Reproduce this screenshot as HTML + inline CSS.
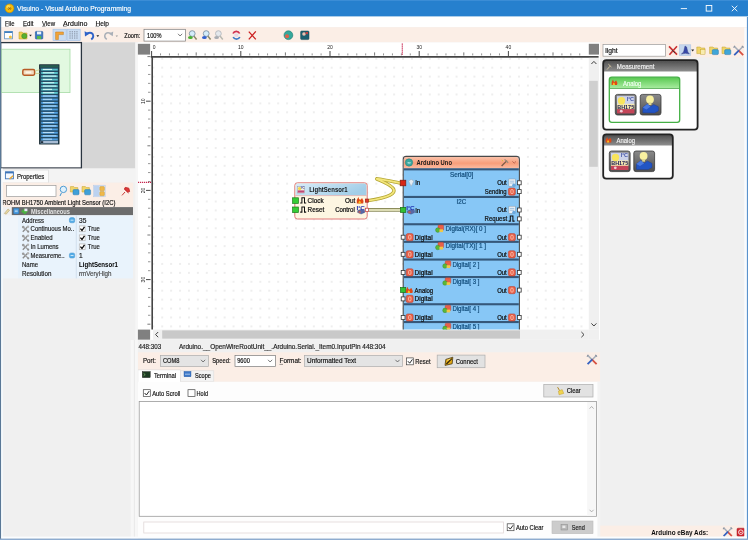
<!DOCTYPE html>
<html><head><meta charset="utf-8"><title>Visuino - Visual Arduino Programming</title>
<style>html,body{margin:0;padding:0;width:748px;height:540px;overflow:hidden;background:#f0f0f0}
svg{display:block;font-family:"Liberation Sans",sans-serif}</style></head><body>
<svg width="748" height="540" viewBox="0 0 748 540">
<defs>
<filter id="bl" filterUnits="userSpaceOnUse" x="-8" y="-8" width="764" height="556"><feGaussianBlur stdDeviation="0.4"/></filter>
<pattern id="g" x="152.3" y="57.8" width="8.92" height="8.92" patternUnits="userSpaceOnUse"><path d="M0 1 h2 M1 0 v2" stroke="#e2e2e2" stroke-width="0.7" fill="none"/></pattern>
<linearGradient id="hd" x1="0" y1="0" x2="0" y2="1"><stop offset="0" stop-color="#4c4c4c"/><stop offset="1" stop-color="#8e8e8e"/></linearGradient>
<linearGradient id="hg" x1="0" y1="0" x2="0" y2="1"><stop offset="0" stop-color="#58c850"/><stop offset="1" stop-color="#a8eca0"/></linearGradient>
<linearGradient id="ic" x1="0" y1="0" x2="0" y2="1"><stop offset="0" stop-color="#8a8a8a"/><stop offset="1" stop-color="#4e4e4e"/></linearGradient>
<clipPath id="cv"><rect x="153" y="57.8" width="435.8" height="271.8"/></clipPath>
<linearGradient id="ah" x1="0" y1="0" x2="0" y2="1"><stop offset="0" stop-color="#fbc2aa"/><stop offset="0.55" stop-color="#f89e7a"/><stop offset="1" stop-color="#fbbca2"/></linearGradient>
<linearGradient id="sh" x1="0" y1="0" x2="1" y2="0.4"><stop offset="0" stop-color="#d8ecf8"/><stop offset="1" stop-color="#a2cee8"/></linearGradient>
</defs>
<g filter="url(#bl)">
<rect x="-8" y="-8" width="764" height="556" fill="#f0f0f0"/>
<rect x="-8" y="-8" width="764" height="24.6" fill="#2680ce"/>
<rect x="-8" y="-8" width="764" height="9" fill="#3a8dd6"/>
<circle cx="9.5" cy="8.3" r="4.4" fill="#f5bc08" stroke="#c98a00" stroke-width="0.6"/>
<circle cx="8.4" cy="7" r="2" fill="#fbd850"/>
<text x="9.5" y="10.48" font-size="5.5" fill="#8a5200" font-weight="bold" text-anchor="middle">∞</text>
<text x="17" y="11.364" font-size="7.4" fill="#ffffff" textLength="114" lengthAdjust="spacingAndGlyphs" stroke="#ffffff" stroke-width="0.16">Visuino - Visual Arduino Programming</text>
<line x1="680.8" y1="8.6" x2="687" y2="8.6" stroke="#fff" stroke-width="0.9"/>
<rect x="706.2" y="5.5" width="5.6" height="5.6" fill="none" stroke="#fff" stroke-width="0.9"/>
<path d="M731.8 5.8 L737.3 11.2 M737.3 5.8 L731.8 11.2" fill="none" stroke="#fff" stroke-width="0.9"/>
<rect x="-8" y="16.6" width="764" height="10.6" fill="#ffffff"/>
<text x="5" y="25.728" font-size="7.3" fill="#111" textLength="9.5" lengthAdjust="spacingAndGlyphs" stroke="#111" stroke-width="0.16">File</text>
<line x1="5" y1="26.3" x2="8.6" y2="26.3" stroke="#333" stroke-width="0.5"/>
<text x="23" y="25.728" font-size="7.3" fill="#111" textLength="10.5" lengthAdjust="spacingAndGlyphs" stroke="#111" stroke-width="0.16">Edit</text>
<line x1="23" y1="26.3" x2="26.6" y2="26.3" stroke="#333" stroke-width="0.5"/>
<text x="42" y="25.728" font-size="7.3" fill="#111" textLength="13" lengthAdjust="spacingAndGlyphs" stroke="#111" stroke-width="0.16">View</text>
<line x1="42" y1="26.3" x2="45.6" y2="26.3" stroke="#333" stroke-width="0.5"/>
<text x="63" y="25.728" font-size="7.3" fill="#111" textLength="24.5" lengthAdjust="spacingAndGlyphs" stroke="#111" stroke-width="0.16">Arduino</text>
<line x1="63" y1="26.3" x2="66.6" y2="26.3" stroke="#333" stroke-width="0.5"/>
<text x="95.5" y="25.728" font-size="7.3" fill="#111" textLength="13.5" lengthAdjust="spacingAndGlyphs" stroke="#111" stroke-width="0.16">Help</text>
<line x1="95.5" y1="26.3" x2="99.1" y2="26.3" stroke="#333" stroke-width="0.5"/>
<rect x="-8" y="27.2" width="764" height="15.2" fill="#fbeee6"/>
<rect x="4.6" y="31.4" width="7.8" height="7.4" fill="#fff" stroke="#5b8fc4" stroke-width="0.8"/>
<rect x="4.6" y="31.4" width="7.8" height="1.6" fill="#3f7fc0"/>
<circle cx="10.4" cy="37" r="1.5" fill="#f0c040"/>
<path d="M19 32 h3 l1 1 h4 v6 h-8z" fill="#f0d050" stroke="#b89820" stroke-width="0.5"/>
<circle cx="24.3" cy="36" r="2.6" fill="#58b030" stroke="#3a8020" stroke-width="0.5"/>
<path d="M29.2 34.8 h2.6 l-1.3 1.6z" fill="#222"/>
<rect x="35.4" y="31.4" width="7.4" height="7.6" fill="#3d78c2" stroke="#27569a" stroke-width="0.6" rx="0.8"/>
<rect x="37" y="31.6" width="4.2" height="2.8" fill="#eaf2fb"/>
<rect x="37" y="36" width="4.2" height="3" fill="#58b848"/>
<rect x="53" y="29.2" width="13.2" height="11.4" fill="#c9dcf2" stroke="#9fbfe6" stroke-width="0.6"/>
<path d="M55.6 32 h7.8 v2.6 h-5 v5 h-2.8z" fill="#f2a438" stroke="#c47a18" stroke-width="0.5"/>
<rect x="67" y="29.2" width="13.2" height="11.4" fill="#c9dcf2" stroke="#9fbfe6" stroke-width="0.6"/>
<rect x="69.4" y="31.2" width="1.3" height="1.1" fill="#8a96a8"/>
<rect x="69.4" y="33.3" width="1.3" height="1.1" fill="#8a96a8"/>
<rect x="69.4" y="35.4" width="1.3" height="1.1" fill="#8a96a8"/>
<rect x="69.4" y="37.5" width="1.3" height="1.1" fill="#8a96a8"/>
<rect x="71.7" y="31.2" width="1.3" height="1.1" fill="#8a96a8"/>
<rect x="71.7" y="33.3" width="1.3" height="1.1" fill="#8a96a8"/>
<rect x="71.7" y="35.4" width="1.3" height="1.1" fill="#8a96a8"/>
<rect x="71.7" y="37.5" width="1.3" height="1.1" fill="#8a96a8"/>
<rect x="74" y="31.2" width="1.3" height="1.1" fill="#8a96a8"/>
<rect x="74" y="33.3" width="1.3" height="1.1" fill="#8a96a8"/>
<rect x="74" y="35.4" width="1.3" height="1.1" fill="#8a96a8"/>
<rect x="74" y="37.5" width="1.3" height="1.1" fill="#8a96a8"/>
<rect x="76.3" y="31.2" width="1.3" height="1.1" fill="#8a96a8"/>
<rect x="76.3" y="33.3" width="1.3" height="1.1" fill="#8a96a8"/>
<rect x="76.3" y="35.4" width="1.3" height="1.1" fill="#8a96a8"/>
<rect x="76.3" y="37.5" width="1.3" height="1.1" fill="#8a96a8"/>
<path d="M87 33.4 q5.4-1.8 6.2 2 q0.4 2.4-2 4" fill="none" stroke="#2f63c8" stroke-width="1.9"/>
<path d="M84.6 31.2 l0.4 5.2 l4.4-2.6z" fill="#2f63c8"/>
<path d="M96.4 35.2 h2.8 l-1.4 1.7z" fill="#222"/>
<path d="M111 33.4 q-5.4-1.8 -6.2 2 q-0.4 2.4 2 4" fill="none" stroke="#aab0b8" stroke-width="1.5"/>
<path d="M113.2 31.4 l-0.4 4.8 l-4-2.4z" fill="#aab0b8"/>
<path d="M115.6 35.4 h2.4 l-1.2 1.5z" fill="#999"/>
<text x="124.2" y="37.576" font-size="6.6" fill="#111" textLength="16" lengthAdjust="spacingAndGlyphs" stroke="#111" stroke-width="0.16">Zoom:</text>
<rect x="144" y="29.3" width="41.4" height="11.8" fill="#fff" stroke="#7a7a7a" stroke-width="0.7"/>
<text x="147" y="37.676" font-size="6.6" fill="#111" textLength="14.5" lengthAdjust="spacingAndGlyphs" stroke="#111" stroke-width="0.16">100%</text>
<path d="M178 33.8 l2.1 2.2 l2.1-2.2" fill="none" stroke="#444" stroke-width="0.7"/>
<line x1="193.4" y1="35.6" x2="196.6" y2="39.4" stroke="#8a8868" stroke-width="1.5"/>
<circle cx="192.2" cy="33.6" r="2.9" fill="#d4ecfa" stroke="#7e92a4" stroke-width="0.9"/>
<ellipse cx="190.4" cy="37.4" rx="2.4" ry="1.5" fill="#48b030"/>
<line x1="207.4" y1="35.6" x2="210.6" y2="39.4" stroke="#8a8868" stroke-width="1.5"/>
<circle cx="206.2" cy="33.6" r="2.9" fill="#d4ecfa" stroke="#7e92a4" stroke-width="0.9"/>
<ellipse cx="204.4" cy="37.4" rx="2.4" ry="1.5" fill="#3060d0"/>
<line x1="219.6" y1="35.6" x2="222.8" y2="39.4" stroke="#b8b8b0" stroke-width="1.5"/>
<circle cx="218.4" cy="33.6" r="2.9" fill="#e4e8ec" stroke="#b4b8bc" stroke-width="0.9"/>
<ellipse cx="216.6" cy="37.4" rx="2.4" ry="1.5" fill="#a8acb2"/>
<path d="M233 33.5 a3.6 3.6 0 0 1 6.6 0" fill="none" stroke="#d03050" stroke-width="1.7"/>
<path d="M239.8 37 a3.6 3.6 0 0 1 -6.6 0" fill="none" stroke="#3a78c8" stroke-width="1.7"/>
<rect x="234.4" y="33.6" width="3.8" height="3.2" fill="#e6d8e6"/>
<path d="M248.8 31.6 L255.8 39.4 M255.8 31.4 L248.8 39.4" fill="none" stroke="#cc2020" stroke-width="1.3"/>
<circle cx="288.4" cy="35.2" r="4.4" fill="#34a89c" stroke="#1e7a72" stroke-width="0.6"/>
<circle cx="287" cy="36.2" r="2" fill="#e06048"/>
<rect x="300.6" y="31" width="8.4" height="8.6" fill="#1f5f70" stroke="#17444f" stroke-width="0.5" rx="1"/>
<circle cx="304" cy="34" r="1.8" fill="#e8c0b0"/>
<rect x="305.6" y="32" width="2.4" height="2.2" fill="#c04040"/>
<rect x="-8" y="42.4" width="143.3" height="506" fill="#f0f0f0"/>
<rect x="82" y="42.4" width="53.3" height="126" fill="#d6d6d6"/>
<rect x="0.6" y="42.6" width="80.8" height="125.4" fill="#ffffff" stroke="#2c3440" stroke-width="1.3"/>
<rect x="1.6" y="49.2" width="68.4" height="43.4" fill="#e2f9e0" stroke="#a6dba6" stroke-width="0.8"/>
<rect x="39.6" y="64.8" width="19.4" height="79.2" fill="#244a62" stroke="#16262e" stroke-width="0.9"/>
<rect x="40.2" y="65.2" width="18.2" height="2.2" fill="#285e50"/>
<rect x="41.2" y="68.7" width="16.6" height="1.9" fill="#58c4cc"/>
<rect x="43" y="68.9" width="9" height="1.1" fill="#d4f6f6"/>
<rect x="41.2" y="72.02" width="16.6" height="1.9" fill="#58c4cc"/>
<rect x="43" y="72.22" width="11.2" height="1.1" fill="#d4f6f6"/>
<rect x="41.2" y="75.34" width="16.6" height="1.9" fill="#58c4cc"/>
<rect x="43" y="75.54" width="13.4" height="1.1" fill="#d4f6f6"/>
<rect x="41.2" y="78.66" width="16.6" height="1.9" fill="#58c4cc"/>
<rect x="43" y="78.86" width="9" height="1.1" fill="#d4f6f6"/>
<rect x="41.2" y="81.98" width="16.6" height="1.9" fill="#58c4cc"/>
<rect x="43" y="82.18" width="11.2" height="1.1" fill="#d4f6f6"/>
<rect x="41.2" y="85.3" width="16.6" height="1.9" fill="#58c4cc"/>
<rect x="43" y="85.5" width="13.4" height="1.1" fill="#d4f6f6"/>
<rect x="41.2" y="88.62" width="16.6" height="1.9" fill="#58c4cc"/>
<rect x="43" y="88.82" width="9" height="1.1" fill="#d4f6f6"/>
<rect x="41.2" y="91.94" width="16.6" height="1.9" fill="#58c4cc"/>
<rect x="43" y="92.14" width="11.2" height="1.1" fill="#d4f6f6"/>
<rect x="41.2" y="95.26" width="16.6" height="1.9" fill="#4e9ee0"/>
<rect x="43" y="95.46" width="13.4" height="1.1" fill="#b4dcf8"/>
<rect x="41.2" y="98.58" width="16.6" height="1.9" fill="#4e9ee0"/>
<rect x="43" y="98.78" width="9" height="1.1" fill="#b4dcf8"/>
<rect x="41.2" y="101.9" width="16.6" height="1.9" fill="#4e9ee0"/>
<rect x="43" y="102.1" width="11.2" height="1.1" fill="#b4dcf8"/>
<rect x="41.2" y="105.22" width="16.6" height="1.9" fill="#4e9ee0"/>
<rect x="43" y="105.42" width="13.4" height="1.1" fill="#b4dcf8"/>
<rect x="41.2" y="108.54" width="16.6" height="1.9" fill="#4e9ee0"/>
<rect x="43" y="108.74" width="9" height="1.1" fill="#b4dcf8"/>
<rect x="41.2" y="111.86" width="16.6" height="1.9" fill="#4e9ee0"/>
<rect x="43" y="112.06" width="11.2" height="1.1" fill="#b4dcf8"/>
<rect x="41.2" y="115.18" width="16.6" height="1.9" fill="#4e9ee0"/>
<rect x="43" y="115.38" width="13.4" height="1.1" fill="#b4dcf8"/>
<rect x="41.2" y="118.5" width="16.6" height="1.9" fill="#4e9ee0"/>
<rect x="43" y="118.7" width="9" height="1.1" fill="#b4dcf8"/>
<rect x="41.2" y="121.82" width="16.6" height="1.9" fill="#4e9ee0"/>
<rect x="43" y="122.02" width="11.2" height="1.1" fill="#b4dcf8"/>
<rect x="41.2" y="125.14" width="16.6" height="1.9" fill="#4e9ee0"/>
<rect x="43" y="125.34" width="13.4" height="1.1" fill="#b4dcf8"/>
<rect x="41.2" y="128.46" width="16.6" height="1.9" fill="#4e9ee0"/>
<rect x="43" y="128.66" width="9" height="1.1" fill="#b4dcf8"/>
<rect x="41.2" y="131.78" width="16.6" height="1.9" fill="#4e9ee0"/>
<rect x="43" y="131.98" width="11.2" height="1.1" fill="#b4dcf8"/>
<rect x="41.2" y="135.1" width="16.6" height="1.9" fill="#4e9ee0"/>
<rect x="43" y="135.3" width="13.4" height="1.1" fill="#b4dcf8"/>
<rect x="41.2" y="138.42" width="16.6" height="1.9" fill="#4e9ee0"/>
<rect x="43" y="138.62" width="9" height="1.1" fill="#b4dcf8"/>
<rect x="40.6" y="140.8" width="17.4" height="2.6" fill="#a8bcd4"/>
<rect x="40.8" y="141.2" width="2.4" height="1.8" fill="#203040"/>
<rect x="22.8" y="69.6" width="11.8" height="5.6" fill="#f2dcc0" stroke="#b85c28" stroke-width="1.5" rx="1.4"/>
<rect x="25.6" y="71.4" width="5.6" height="2" fill="#fdf4e6"/>
<path d="M35.4 70.8 L39.6 69.8 M35.4 73.6 L39.6 73.4" fill="none" stroke="#cccc88" stroke-width="0.8"/>
<rect x="0" y="168.6" width="135.3" height="14" fill="#f3f3f3"/>
<rect x="1.4" y="170" width="47.2" height="13" fill="#fbfbfb" stroke="#d9d9d9" stroke-width="0.7"/>
<rect x="5.4" y="171.8" width="8" height="7" fill="#f4f8fd" stroke="#3d74b8" stroke-width="0.9"/>
<rect x="5.4" y="171.8" width="8" height="1.6" fill="#3d74b8"/>
<path d="M9 178.6 l3.6-3.4 l1 1 l-3.6 3.4z" fill="#e8a838"/>
<text x="16.9" y="178.848" font-size="6.8" fill="#111" textLength="27.4" lengthAdjust="spacingAndGlyphs" stroke="#111" stroke-width="0.16">Properties</text>
<rect x="0.8" y="182.6" width="132.4" height="24.5" fill="#fbeee6"/>
<rect x="6.4" y="185.6" width="49.6" height="11" fill="#fff" stroke="#9a9a9a" stroke-width="0.7"/>
<circle cx="63.4" cy="189.4" r="3.2" fill="#dff0fb" stroke="#3f93cf" stroke-width="0.9"/>
<line x1="61.4" y1="193" x2="60" y2="196" stroke="#3f93cf" stroke-width="1"/>
<path d="M70.4 186.6 h3.4 l1 1 h3 v4.4 h-7.4z" fill="#f2d468" stroke="#c3a02c" stroke-width="0.5"/>
<rect x="73" y="189.6" width="6" height="5.2" fill="#3fa0d8" stroke="#2878b0" stroke-width="0.5" rx="1"/>
<path d="M82 186.6 h3.4 l1 1 h3 v4.4 h-7.4z" fill="#f2d468" stroke="#c3a02c" stroke-width="0.5"/>
<rect x="84.6" y="189.6" width="6" height="5.2" fill="#3fa0d8" stroke="#2878b0" stroke-width="0.5" rx="1"/>
<rect x="93.4" y="185.2" width="11.8" height="11.6" fill="#dbe6f4" stroke="#b4c8e4" stroke-width="0.5"/>
<rect x="94" y="185.8" width="5.4" height="10.4" fill="#bcd2f0"/>
<rect x="99.8" y="186.6" width="4.6" height="4.2" fill="#f0b848" stroke="#c89028" stroke-width="0.4" rx="0.8"/>
<rect x="99.8" y="191.6" width="4.6" height="4.2" fill="#f0b848" stroke="#c89028" stroke-width="0.4" rx="0.8"/>
<path d="M122 195.4 l3-3.4 M124 188.6 l4.6 4.4 M125.2 187.4 l3.6 0.8 l0.8 3.4 l-2 0.4 l-3-2.8z" fill="#e03838" stroke="#c02828" stroke-width="0.9"/>
<text x="2.2" y="204.904" font-size="6.4" fill="#111" textLength="113.2" lengthAdjust="spacingAndGlyphs" stroke="#111" stroke-width="0.16">ROHM BH1750 Ambient Light Sensor (I2C)</text>
<path d="M4.4 213.4 l3.6-4.4 l1.6 1.2 l-3.4 4z" fill="#e8d8a0" stroke="#a89868" stroke-width="0.5"/>
<rect x="11.8" y="207.1" width="121.2" height="8.1" fill="#6c6c6c"/>
<rect x="13.6" y="208.3" width="5.3" height="5.6" fill="#4a9de0" stroke="#2a6cb0" stroke-width="0.5" rx="0.8"/>
<line x1="14.8" y1="211.1" x2="17.7" y2="211.1" stroke="#fff" stroke-width="0.8"/>
<path d="M21 211.6 l3.4-3 l3.6 2.6 l-3 3.4z" fill="#48b040"/>
<rect x="24.4" y="208.6" width="3" height="2.6" fill="#e8e8f8"/>
<text x="31" y="213.676" font-size="6.6" fill="#e4e4e4" font-weight="bold" textLength="39" lengthAdjust="spacingAndGlyphs">Miscellaneous</text>
<rect x="2.8" y="215.4" width="15.2" height="63" fill="#f0f5fa"/>
<rect x="18" y="215.4" width="115" height="63" fill="#e9f3fc"/>
<line x1="76.3" y1="215.4" x2="76.3" y2="278.4" stroke="#c9d9e8" stroke-width="0.7"/>
<text x="22" y="222.576" font-size="6.6" fill="#1a1a1a" textLength="22" lengthAdjust="spacingAndGlyphs" stroke="#1a1a1a" stroke-width="0.16">Address</text>
<text x="79" y="222.576" font-size="6.6" fill="#1a1a1a" stroke="#1a1a1a" stroke-width="0.16">35</text>
<text x="30.6" y="231.276" font-size="6.6" fill="#1a1a1a" textLength="43.6" lengthAdjust="spacingAndGlyphs" stroke="#1a1a1a" stroke-width="0.16">Continuous Mo..</text>
<path d="M22.8 231.70000000000002 l4.8-5" fill="none" stroke="#8a8a8a" stroke-width="1.3"/>
<path d="M23.4 227.3 l4.6 4.2" fill="none" stroke="#a2a2a2" stroke-width="1.3"/>
<circle cx="23.2" cy="227.1" r="1.3" fill="#9a9a9a"/>
<circle cx="28" cy="226.7" r="1.2" fill="#b4b4b4"/>
<circle cx="28.2" cy="231.7" r="1.1" fill="#8e8e8e"/>
<rect x="79.3" y="225.9" width="5.8" height="5.8" fill="#fff" stroke="#b4b4b4" stroke-width="0.7"/>
<path d="M80.4 228.70000000000002 l1.6 1.8 l2.5-3.6" fill="none" stroke="#000" stroke-width="1.25"/>
<text x="87.8" y="231.276" font-size="6.6" fill="#1a1a1a" textLength="12" lengthAdjust="spacingAndGlyphs" stroke="#1a1a1a" stroke-width="0.16">True</text>
<text x="30.6" y="240.276" font-size="6.6" fill="#1a1a1a" textLength="22" lengthAdjust="spacingAndGlyphs" stroke="#1a1a1a" stroke-width="0.16">Enabled</text>
<path d="M22.8 240.70000000000002 l4.8-5" fill="none" stroke="#8a8a8a" stroke-width="1.3"/>
<path d="M23.4 236.3 l4.6 4.2" fill="none" stroke="#a2a2a2" stroke-width="1.3"/>
<circle cx="23.2" cy="236.1" r="1.3" fill="#9a9a9a"/>
<circle cx="28" cy="235.7" r="1.2" fill="#b4b4b4"/>
<circle cx="28.2" cy="240.7" r="1.1" fill="#8e8e8e"/>
<rect x="79.3" y="234.9" width="5.8" height="5.8" fill="#fff" stroke="#b4b4b4" stroke-width="0.7"/>
<path d="M80.4 237.70000000000002 l1.6 1.8 l2.5-3.6" fill="none" stroke="#000" stroke-width="1.25"/>
<text x="87.8" y="240.276" font-size="6.6" fill="#1a1a1a" textLength="12" lengthAdjust="spacingAndGlyphs" stroke="#1a1a1a" stroke-width="0.16">True</text>
<text x="30.6" y="249.276" font-size="6.6" fill="#1a1a1a" textLength="28" lengthAdjust="spacingAndGlyphs" stroke="#1a1a1a" stroke-width="0.16">In Lumens</text>
<path d="M22.8 249.70000000000002 l4.8-5" fill="none" stroke="#8a8a8a" stroke-width="1.3"/>
<path d="M23.4 245.3 l4.6 4.2" fill="none" stroke="#a2a2a2" stroke-width="1.3"/>
<circle cx="23.2" cy="245.1" r="1.3" fill="#9a9a9a"/>
<circle cx="28" cy="244.7" r="1.2" fill="#b4b4b4"/>
<circle cx="28.2" cy="249.7" r="1.1" fill="#8e8e8e"/>
<rect x="79.3" y="243.9" width="5.8" height="5.8" fill="#fff" stroke="#b4b4b4" stroke-width="0.7"/>
<path d="M80.4 246.70000000000002 l1.6 1.8 l2.5-3.6" fill="none" stroke="#000" stroke-width="1.25"/>
<text x="87.8" y="249.276" font-size="6.6" fill="#1a1a1a" textLength="12" lengthAdjust="spacingAndGlyphs" stroke="#1a1a1a" stroke-width="0.16">True</text>
<text x="30.6" y="257.876" font-size="6.6" fill="#1a1a1a" textLength="34" lengthAdjust="spacingAndGlyphs" stroke="#1a1a1a" stroke-width="0.16">Measureme..</text>
<path d="M22.8 258.3 l4.8-5" fill="none" stroke="#8a8a8a" stroke-width="1.3"/>
<path d="M23.4 253.9 l4.6 4.2" fill="none" stroke="#a2a2a2" stroke-width="1.3"/>
<circle cx="23.2" cy="253.7" r="1.3" fill="#9a9a9a"/>
<circle cx="28" cy="253.3" r="1.2" fill="#b4b4b4"/>
<circle cx="28.2" cy="258.3" r="1.1" fill="#8e8e8e"/>
<text x="79" y="257.876" font-size="6.6" fill="#1a1a1a" stroke="#1a1a1a" stroke-width="0.16">1</text>
<text x="22" y="267.376" font-size="6.6" fill="#1a1a1a" textLength="16" lengthAdjust="spacingAndGlyphs" stroke="#1a1a1a" stroke-width="0.16">Name</text>
<text x="79" y="267.376" font-size="6.6" fill="#000" font-weight="bold" textLength="39" lengthAdjust="spacingAndGlyphs">LightSensor1</text>
<text x="22" y="276.076" font-size="6.6" fill="#1a1a1a" textLength="29.4" lengthAdjust="spacingAndGlyphs" stroke="#1a1a1a" stroke-width="0.16">Resolution</text>
<text x="79" y="276.076" font-size="6.6" fill="#4a4a4a" textLength="32.5" lengthAdjust="spacingAndGlyphs" stroke="#4a4a4a" stroke-width="0.16">rmVeryHigh</text>
<rect x="69.4" y="217.6" width="5.3" height="5.2" fill="#54ace6" stroke="#3a8cc8" stroke-width="0.4" rx="1.6"/>
<line x1="70.6" y1="220.2" x2="73.5" y2="220.2" stroke="#fff" stroke-width="0.7"/>
<rect x="69.4" y="252.9" width="5.3" height="5.2" fill="#54ace6" stroke="#3a8cc8" stroke-width="0.4" rx="1.6"/>
<line x1="70.6" y1="255.5" x2="73.5" y2="255.5" stroke="#fff" stroke-width="0.7"/>
<rect x="135.3" y="42.4" width="2.6" height="300" fill="#f6f6f6"/>
<rect x="137.9" y="42.4" width="462" height="298" fill="#ffffff"/>
<rect x="137.9" y="43.8" width="12.2" height="10.8" fill="#808080"/>
<rect x="588.8" y="43.8" width="10.2" height="10.8" fill="#808080"/>
<rect x="137.9" y="329.6" width="12.2" height="10.2" fill="#808080"/>
<rect x="153" y="57.8" width="435.8" height="271.8" fill="url(#g)"/>
<line x1="151.6" y1="51" x2="151.6" y2="56" stroke="#333" stroke-width="0.9"/>
<line x1="160.52" y1="53.4" x2="160.52" y2="55.4" stroke="#6a6a6a" stroke-width="0.7"/>
<line x1="169.44" y1="53.4" x2="169.44" y2="55.4" stroke="#6a6a6a" stroke-width="0.7"/>
<line x1="178.36" y1="53.4" x2="178.36" y2="55.4" stroke="#6a6a6a" stroke-width="0.7"/>
<line x1="187.28" y1="53.4" x2="187.28" y2="55.4" stroke="#6a6a6a" stroke-width="0.7"/>
<line x1="196.2" y1="52.4" x2="196.2" y2="55.6" stroke="#555" stroke-width="0.8"/>
<line x1="205.12" y1="53.4" x2="205.12" y2="55.4" stroke="#6a6a6a" stroke-width="0.7"/>
<line x1="214.04" y1="53.4" x2="214.04" y2="55.4" stroke="#6a6a6a" stroke-width="0.7"/>
<line x1="222.96" y1="53.4" x2="222.96" y2="55.4" stroke="#6a6a6a" stroke-width="0.7"/>
<line x1="231.88" y1="53.4" x2="231.88" y2="55.4" stroke="#6a6a6a" stroke-width="0.7"/>
<line x1="240.8" y1="51" x2="240.8" y2="56" stroke="#333" stroke-width="0.9"/>
<line x1="249.72" y1="53.4" x2="249.72" y2="55.4" stroke="#6a6a6a" stroke-width="0.7"/>
<line x1="258.64" y1="53.4" x2="258.64" y2="55.4" stroke="#6a6a6a" stroke-width="0.7"/>
<line x1="267.56" y1="53.4" x2="267.56" y2="55.4" stroke="#6a6a6a" stroke-width="0.7"/>
<line x1="276.48" y1="53.4" x2="276.48" y2="55.4" stroke="#6a6a6a" stroke-width="0.7"/>
<line x1="285.4" y1="52.4" x2="285.4" y2="55.6" stroke="#555" stroke-width="0.8"/>
<line x1="294.32" y1="53.4" x2="294.32" y2="55.4" stroke="#6a6a6a" stroke-width="0.7"/>
<line x1="303.24" y1="53.4" x2="303.24" y2="55.4" stroke="#6a6a6a" stroke-width="0.7"/>
<line x1="312.16" y1="53.4" x2="312.16" y2="55.4" stroke="#6a6a6a" stroke-width="0.7"/>
<line x1="321.08" y1="53.4" x2="321.08" y2="55.4" stroke="#6a6a6a" stroke-width="0.7"/>
<line x1="330" y1="51" x2="330" y2="56" stroke="#333" stroke-width="0.9"/>
<line x1="338.92" y1="53.4" x2="338.92" y2="55.4" stroke="#6a6a6a" stroke-width="0.7"/>
<line x1="347.84" y1="53.4" x2="347.84" y2="55.4" stroke="#6a6a6a" stroke-width="0.7"/>
<line x1="356.76" y1="53.4" x2="356.76" y2="55.4" stroke="#6a6a6a" stroke-width="0.7"/>
<line x1="365.68" y1="53.4" x2="365.68" y2="55.4" stroke="#6a6a6a" stroke-width="0.7"/>
<line x1="374.6" y1="52.4" x2="374.6" y2="55.6" stroke="#555" stroke-width="0.8"/>
<line x1="383.52" y1="53.4" x2="383.52" y2="55.4" stroke="#6a6a6a" stroke-width="0.7"/>
<line x1="392.44" y1="53.4" x2="392.44" y2="55.4" stroke="#6a6a6a" stroke-width="0.7"/>
<line x1="401.36" y1="53.4" x2="401.36" y2="55.4" stroke="#6a6a6a" stroke-width="0.7"/>
<line x1="410.28" y1="53.4" x2="410.28" y2="55.4" stroke="#6a6a6a" stroke-width="0.7"/>
<line x1="419.2" y1="51" x2="419.2" y2="56" stroke="#333" stroke-width="0.9"/>
<line x1="428.12" y1="53.4" x2="428.12" y2="55.4" stroke="#6a6a6a" stroke-width="0.7"/>
<line x1="437.04" y1="53.4" x2="437.04" y2="55.4" stroke="#6a6a6a" stroke-width="0.7"/>
<line x1="445.96" y1="53.4" x2="445.96" y2="55.4" stroke="#6a6a6a" stroke-width="0.7"/>
<line x1="454.88" y1="53.4" x2="454.88" y2="55.4" stroke="#6a6a6a" stroke-width="0.7"/>
<line x1="463.8" y1="52.4" x2="463.8" y2="55.6" stroke="#555" stroke-width="0.8"/>
<line x1="472.72" y1="53.4" x2="472.72" y2="55.4" stroke="#6a6a6a" stroke-width="0.7"/>
<line x1="481.64" y1="53.4" x2="481.64" y2="55.4" stroke="#6a6a6a" stroke-width="0.7"/>
<line x1="490.56" y1="53.4" x2="490.56" y2="55.4" stroke="#6a6a6a" stroke-width="0.7"/>
<line x1="499.48" y1="53.4" x2="499.48" y2="55.4" stroke="#6a6a6a" stroke-width="0.7"/>
<line x1="508.4" y1="51" x2="508.4" y2="56" stroke="#333" stroke-width="0.9"/>
<line x1="517.32" y1="53.4" x2="517.32" y2="55.4" stroke="#6a6a6a" stroke-width="0.7"/>
<line x1="526.24" y1="53.4" x2="526.24" y2="55.4" stroke="#6a6a6a" stroke-width="0.7"/>
<line x1="535.16" y1="53.4" x2="535.16" y2="55.4" stroke="#6a6a6a" stroke-width="0.7"/>
<line x1="544.08" y1="53.4" x2="544.08" y2="55.4" stroke="#6a6a6a" stroke-width="0.7"/>
<line x1="553" y1="52.4" x2="553" y2="55.6" stroke="#555" stroke-width="0.8"/>
<line x1="561.92" y1="53.4" x2="561.92" y2="55.4" stroke="#6a6a6a" stroke-width="0.7"/>
<line x1="570.84" y1="53.4" x2="570.84" y2="55.4" stroke="#6a6a6a" stroke-width="0.7"/>
<line x1="579.76" y1="53.4" x2="579.76" y2="55.4" stroke="#6a6a6a" stroke-width="0.7"/>
<text x="152.8" y="49.2" font-size="5" fill="#222">0</text>
<text x="240.8" y="49.2" font-size="5" fill="#222" text-anchor="middle">10</text>
<text x="330" y="49.2" font-size="5" fill="#222" text-anchor="middle">20</text>
<text x="419.2" y="49.2" font-size="5" fill="#222" text-anchor="middle">30</text>
<text x="508.4" y="49.2" font-size="5" fill="#222" text-anchor="middle">40</text>
<line x1="147.4" y1="56.6" x2="150.4" y2="56.6" stroke="#555" stroke-width="0.8"/>
<line x1="148" y1="65.52" x2="150.4" y2="65.52" stroke="#6a6a6a" stroke-width="0.7"/>
<line x1="148" y1="74.44" x2="150.4" y2="74.44" stroke="#6a6a6a" stroke-width="0.7"/>
<line x1="148" y1="83.36" x2="150.4" y2="83.36" stroke="#6a6a6a" stroke-width="0.7"/>
<line x1="148" y1="92.28" x2="150.4" y2="92.28" stroke="#6a6a6a" stroke-width="0.7"/>
<line x1="146" y1="101.2" x2="150.6" y2="101.2" stroke="#333" stroke-width="0.9"/>
<line x1="148" y1="110.12" x2="150.4" y2="110.12" stroke="#6a6a6a" stroke-width="0.7"/>
<line x1="148" y1="119.04" x2="150.4" y2="119.04" stroke="#6a6a6a" stroke-width="0.7"/>
<line x1="148" y1="127.96" x2="150.4" y2="127.96" stroke="#6a6a6a" stroke-width="0.7"/>
<line x1="148" y1="136.88" x2="150.4" y2="136.88" stroke="#6a6a6a" stroke-width="0.7"/>
<line x1="147.4" y1="145.8" x2="150.4" y2="145.8" stroke="#555" stroke-width="0.8"/>
<line x1="148" y1="154.72" x2="150.4" y2="154.72" stroke="#6a6a6a" stroke-width="0.7"/>
<line x1="148" y1="163.64" x2="150.4" y2="163.64" stroke="#6a6a6a" stroke-width="0.7"/>
<line x1="148" y1="172.56" x2="150.4" y2="172.56" stroke="#6a6a6a" stroke-width="0.7"/>
<line x1="148" y1="181.48" x2="150.4" y2="181.48" stroke="#6a6a6a" stroke-width="0.7"/>
<line x1="146" y1="190.4" x2="150.6" y2="190.4" stroke="#333" stroke-width="0.9"/>
<line x1="148" y1="199.32" x2="150.4" y2="199.32" stroke="#6a6a6a" stroke-width="0.7"/>
<line x1="148" y1="208.24" x2="150.4" y2="208.24" stroke="#6a6a6a" stroke-width="0.7"/>
<line x1="148" y1="217.16" x2="150.4" y2="217.16" stroke="#6a6a6a" stroke-width="0.7"/>
<line x1="148" y1="226.08" x2="150.4" y2="226.08" stroke="#6a6a6a" stroke-width="0.7"/>
<line x1="147.4" y1="235" x2="150.4" y2="235" stroke="#555" stroke-width="0.8"/>
<line x1="148" y1="243.92" x2="150.4" y2="243.92" stroke="#6a6a6a" stroke-width="0.7"/>
<line x1="148" y1="252.84" x2="150.4" y2="252.84" stroke="#6a6a6a" stroke-width="0.7"/>
<line x1="148" y1="261.76" x2="150.4" y2="261.76" stroke="#6a6a6a" stroke-width="0.7"/>
<line x1="148" y1="270.68" x2="150.4" y2="270.68" stroke="#6a6a6a" stroke-width="0.7"/>
<line x1="146" y1="279.6" x2="150.6" y2="279.6" stroke="#333" stroke-width="0.9"/>
<line x1="148" y1="288.52" x2="150.4" y2="288.52" stroke="#6a6a6a" stroke-width="0.7"/>
<line x1="148" y1="297.44" x2="150.4" y2="297.44" stroke="#6a6a6a" stroke-width="0.7"/>
<line x1="148" y1="306.36" x2="150.4" y2="306.36" stroke="#6a6a6a" stroke-width="0.7"/>
<line x1="148" y1="315.28" x2="150.4" y2="315.28" stroke="#6a6a6a" stroke-width="0.7"/>
<line x1="147.4" y1="324.2" x2="150.4" y2="324.2" stroke="#555" stroke-width="0.8"/>
<text transform="translate(144.6 101.2) rotate(-90)" font-size="5" fill="#222" text-anchor="middle">10</text>
<text transform="translate(144.6 190.4) rotate(-90)" font-size="5" fill="#222" text-anchor="middle">20</text>
<text transform="translate(144.6 279.6) rotate(-90)" font-size="5" fill="#222" text-anchor="middle">30</text>
<line x1="402.3" y1="43.6" x2="402.3" y2="55.2" stroke="#c82850" stroke-width="1.2" stroke-dasharray="1.2 0.8"/>
<line x1="138" y1="182.3" x2="151" y2="182.3" stroke="#c82850" stroke-width="1.2" stroke-dasharray="1.2 0.8"/>
<line x1="150.8" y1="56.9" x2="598.6" y2="56.9" stroke="#444" stroke-width="1.8"/>
<line x1="152.2" y1="56" x2="152.2" y2="329.6" stroke="#444" stroke-width="1.6"/>
<rect x="588.8" y="57.9" width="10.2" height="271.7" fill="#f0f0f0"/>
<rect x="589.2" y="80.8" width="8.6" height="86" fill="#cfcfcf"/>
<path d="M591.4 64 l2.5-2.6 l2.5 2.6" fill="none" stroke="#404040" stroke-width="1"/>
<path d="M591.4 323.4 l2.5 2.6 l2.5-2.6" fill="none" stroke="#404040" stroke-width="1"/>
<rect x="153" y="329.6" width="435.8" height="10.2" fill="#f0f0f0"/>
<rect x="162.2" y="330.4" width="357.8" height="8.2" fill="#c9c9c9"/>
<path d="M158.2 332 l-2.6 2.6 l2.6 2.6" fill="none" stroke="#404040" stroke-width="1"/>
<path d="M581.4 332 l2.6 2.6 l-2.6 2.6" fill="none" stroke="#404040" stroke-width="1"/>
<rect x="588.8" y="329.6" width="10.2" height="10.2" fill="#f0f0f0"/>
<g clip-path="url(#cv)">
<path d="M368 200.6 C440 190 332 170 400.7 183" fill="none" stroke="#b4a634" stroke-width="3.4" stroke-linecap="round"/>
<path d="M368 200.6 C440 190 332 170 400.7 183" fill="none" stroke="#f3e67c" stroke-width="1.8" stroke-linecap="round"/>
<line x1="368" y1="209.9" x2="401" y2="209.9" stroke="#8c8c5c" stroke-width="3.6"/>
<line x1="368" y1="209.9" x2="401" y2="209.9" stroke="#dcdcb4" stroke-width="2"/>
<rect x="403.2" y="156.4" width="116.2" height="190" fill="#87c7f6" stroke="#4a4a4a" stroke-width="1.1" rx="3"/>
<path d="M403.8 168.4 V159.4 a2.4 2.4 0 0 1 2.4-2.4 h110.2 a2.4 2.4 0 0 1 2.4 2.4 V168.4z" fill="url(#ah)"/>
<circle cx="409" cy="162.5" r="3.7" fill="#3aa8a0" stroke="#1e7a78" stroke-width="0.5"/>
<text x="409" y="164.184" font-size="4.4" fill="#e8ffff" font-weight="bold" text-anchor="middle">∞</text>
<text x="416.6" y="165.04" font-size="6.5" fill="#1a1a1a" font-weight="bold" textLength="35.4" lengthAdjust="spacingAndGlyphs">Arduino Uno</text>
<path d="M501.6 166 l5.4-5.4" fill="none" stroke="#7a5a48" stroke-width="1.3"/>
<path d="M504.6 159.4 l3.6 3.4" fill="none" stroke="#9a8a78" stroke-width="1.2"/>
<path d="M501.8 160 l1.2 1.2" fill="none" stroke="#d8c030" stroke-width="1"/>
<path d="M512.4 161.4 l1.8 1.8 l1.8-1.8" fill="none" stroke="#b05848" stroke-width="0.8"/>
<rect x="403.8" y="168.3" width="115" height="2.1" fill="#35587a"/>
<rect x="403.8" y="195.9" width="115" height="2.1" fill="#35587a"/>
<rect x="403.8" y="223.2" width="115" height="2.1" fill="#35587a"/>
<rect x="403.8" y="240.8" width="115" height="2.1" fill="#35587a"/>
<rect x="403.8" y="258.5" width="115" height="2.1" fill="#35587a"/>
<rect x="403.8" y="276" width="115" height="2.1" fill="#35587a"/>
<rect x="403.8" y="303.2" width="115" height="2.1" fill="#35587a"/>
<rect x="403.8" y="321" width="115" height="2.1" fill="#35587a"/>
<text x="461.6" y="177.268" font-size="6.3" fill="#15507e" text-anchor="middle" textLength="23.4" lengthAdjust="spacingAndGlyphs" stroke="#15507e" stroke-width="0.22">Serial[0]</text>
<rect x="400.2" y="180.2" width="5.6" height="5.6" fill="#d82818" stroke="#7a1810" stroke-width="0.7"/>
<path d="M408.6 181 l2.6-1.6 l2.6 1.6 l-2.6 5.4z" fill="#e4ecf4" stroke="#98a8b8" stroke-width="0.5"/>
<text x="415.2" y="185.304" font-size="6.4" fill="#111" textLength="5" lengthAdjust="spacingAndGlyphs" stroke="#111" stroke-width="0.22">In</text>
<text x="497.2" y="185.104" font-size="6.4" fill="#111" textLength="9.6" lengthAdjust="spacingAndGlyphs" stroke="#111" stroke-width="0.22">Out</text>
<rect x="508.9" y="179" width="6.4" height="7.2" fill="#eef2f6" stroke="#8898a8" stroke-width="0.5"/>
<line x1="509.9" y1="181.2" x2="514.3" y2="181.2" stroke="#6aa0d0" stroke-width="0.6"/>
<line x1="509.9" y1="183" x2="514.3" y2="183" stroke="#6aa0d0" stroke-width="0.6"/>
<circle cx="513.9" cy="185.2" r="1.7" fill="#68a8e0"/>
<rect x="517.4" y="180.8" width="3.8" height="4" fill="#fff" stroke="#333" stroke-width="0.8"/>
<text x="484.8" y="193.904" font-size="6.4" fill="#111" textLength="21.8" lengthAdjust="spacingAndGlyphs" stroke="#111" stroke-width="0.22">Sending</text>
<rect x="508.4" y="188" width="7" height="7.2" fill="#e86048" stroke="#b83828" stroke-width="0.5" rx="1.6"/>
<rect x="510.8" y="189.6" width="2.4" height="4" fill="none" stroke="#ffd8c8" stroke-width="0.7" rx="1"/>
<rect x="517.4" y="189.6" width="3.8" height="4" fill="#fff" stroke="#333" stroke-width="0.8"/>
<text x="461.4" y="203.668" font-size="6.3" fill="#15507e" text-anchor="middle" textLength="9.6" lengthAdjust="spacingAndGlyphs" stroke="#15507e" stroke-width="0.22">I2C</text>
<rect x="400.6" y="207.4" width="5.2" height="5" fill="#30c030" stroke="#187018" stroke-width="0.7"/>
<path d="M407.4 210.79999999999998 l3.4-1.4 l3.8 1.2 v2 l-3.6 1.6 l-3.6-1.4z" fill="#5868a8" stroke="#384070" stroke-width="0.3"/>
<circle cx="409.4" cy="212.2" r="1.3" fill="#b06060"/>
<text x="406.2" y="210" font-size="5" fill="#2030b0" font-weight="bold" textLength="8.6" lengthAdjust="spacingAndGlyphs">I²C</text>
<text x="415.2" y="212.504" font-size="6.4" fill="#111" textLength="5" lengthAdjust="spacingAndGlyphs" stroke="#111" stroke-width="0.22">In</text>
<text x="497.2" y="212.304" font-size="6.4" fill="#111" textLength="9.6" lengthAdjust="spacingAndGlyphs" stroke="#111" stroke-width="0.22">Out</text>
<rect x="508.9" y="206.2" width="6.4" height="7.2" fill="#eef2f6" stroke="#8898a8" stroke-width="0.5"/>
<line x1="509.9" y1="208.4" x2="514.3" y2="208.4" stroke="#6aa0d0" stroke-width="0.6"/>
<line x1="509.9" y1="210.2" x2="514.3" y2="210.2" stroke="#6aa0d0" stroke-width="0.6"/>
<circle cx="513.9" cy="212.4" r="1.7" fill="#68a8e0"/>
<rect x="517.4" y="208" width="3.8" height="4" fill="#fff" stroke="#333" stroke-width="0.8"/>
<text x="484.6" y="221.204" font-size="6.4" fill="#111" textLength="22.6" lengthAdjust="spacingAndGlyphs" stroke="#111" stroke-width="0.22">Request</text>
<path d="M508.6 221.1 h1.7 v-5.2 h2.6 v5.2 h1.7" fill="none" stroke="#111" stroke-width="1.05"/>
<rect x="517.4" y="216.9" width="3.8" height="4" fill="#fff" stroke="#333" stroke-width="0.8"/>
<rect x="438" y="224.9" width="5.6" height="5.6" fill="#e86048" stroke="#b83828" stroke-width="0.4" rx="1.2"/>
<circle cx="437.8" cy="230.1" r="2.3" fill="#58b838" stroke="#388020" stroke-width="0.4"/>
<rect x="439.4" y="229.3" width="3.6" height="2.8" fill="#f0c848"/>
<text x="445.6" y="231.076" font-size="6.6" fill="#15507e" textLength="40.4" lengthAdjust="spacingAndGlyphs" stroke="#15507e" stroke-width="0.22">Digital(RX)[ 0 ]</text>
<rect x="401.2" y="235.2" width="3.8" height="4" fill="#fff" stroke="#333" stroke-width="0.8"/>
<rect x="406.2" y="233.6" width="7" height="7.2" fill="#e86048" stroke="#b83828" stroke-width="0.5" rx="1.6"/>
<rect x="408.6" y="235.2" width="2.4" height="4" fill="none" stroke="#ffd8c8" stroke-width="0.7" rx="1"/>
<text x="414.6" y="239.704" font-size="6.4" fill="#111" textLength="18" lengthAdjust="spacingAndGlyphs" stroke="#111" stroke-width="0.22">Digital</text>
<text x="497.2" y="239.604" font-size="6.4" fill="#111" textLength="9.6" lengthAdjust="spacingAndGlyphs" stroke="#111" stroke-width="0.22">Out</text>
<rect x="508.4" y="233.6" width="7" height="7.2" fill="#e86048" stroke="#b83828" stroke-width="0.5" rx="1.6"/>
<rect x="510.8" y="235.2" width="2.4" height="4" fill="none" stroke="#ffd8c8" stroke-width="0.7" rx="1"/>
<rect x="517.4" y="235.2" width="3.8" height="4" fill="#fff" stroke="#333" stroke-width="0.8"/>
<rect x="438" y="242.3" width="5.6" height="5.6" fill="#e86048" stroke="#b83828" stroke-width="0.4" rx="1.2"/>
<circle cx="437.8" cy="247.5" r="2.3" fill="#58b838" stroke="#388020" stroke-width="0.4"/>
<rect x="439.4" y="246.7" width="3.6" height="2.8" fill="#f0c848"/>
<text x="445.6" y="248.476" font-size="6.6" fill="#15507e" textLength="40.4" lengthAdjust="spacingAndGlyphs" stroke="#15507e" stroke-width="0.22">Digital(TX)[ 1 ]</text>
<rect x="401.2" y="252.3" width="3.8" height="4" fill="#fff" stroke="#333" stroke-width="0.8"/>
<rect x="406.2" y="250.7" width="7" height="7.2" fill="#e86048" stroke="#b83828" stroke-width="0.5" rx="1.6"/>
<rect x="408.6" y="252.3" width="2.4" height="4" fill="none" stroke="#ffd8c8" stroke-width="0.7" rx="1"/>
<text x="414.6" y="256.804" font-size="6.4" fill="#111" textLength="18" lengthAdjust="spacingAndGlyphs" stroke="#111" stroke-width="0.22">Digital</text>
<text x="497.2" y="256.704" font-size="6.4" fill="#111" textLength="9.6" lengthAdjust="spacingAndGlyphs" stroke="#111" stroke-width="0.22">Out</text>
<rect x="508.4" y="250.7" width="7" height="7.2" fill="#e86048" stroke="#b83828" stroke-width="0.5" rx="1.6"/>
<rect x="510.8" y="252.3" width="2.4" height="4" fill="none" stroke="#ffd8c8" stroke-width="0.7" rx="1"/>
<rect x="517.4" y="252.3" width="3.8" height="4" fill="#fff" stroke="#333" stroke-width="0.8"/>
<rect x="445.2" y="260.8" width="5.6" height="5.6" fill="#e86048" stroke="#b83828" stroke-width="0.4" rx="1.2"/>
<circle cx="445" cy="266" r="2.3" fill="#58b838" stroke="#388020" stroke-width="0.4"/>
<rect x="446.6" y="265.2" width="3.6" height="2.8" fill="#f0c848"/>
<text x="452.4" y="266.976" font-size="6.6" fill="#15507e" textLength="27" lengthAdjust="spacingAndGlyphs" stroke="#15507e" stroke-width="0.22">Digital[ 2 ]</text>
<rect x="401.2" y="270.4" width="3.8" height="4" fill="#fff" stroke="#333" stroke-width="0.8"/>
<rect x="406.2" y="268.8" width="7" height="7.2" fill="#e86048" stroke="#b83828" stroke-width="0.5" rx="1.6"/>
<rect x="408.6" y="270.4" width="2.4" height="4" fill="none" stroke="#ffd8c8" stroke-width="0.7" rx="1"/>
<text x="414.6" y="274.904" font-size="6.4" fill="#111" textLength="18" lengthAdjust="spacingAndGlyphs" stroke="#111" stroke-width="0.22">Digital</text>
<text x="497.2" y="274.804" font-size="6.4" fill="#111" textLength="9.6" lengthAdjust="spacingAndGlyphs" stroke="#111" stroke-width="0.22">Out</text>
<rect x="508.4" y="268.8" width="7" height="7.2" fill="#e86048" stroke="#b83828" stroke-width="0.5" rx="1.6"/>
<rect x="510.8" y="270.4" width="2.4" height="4" fill="none" stroke="#ffd8c8" stroke-width="0.7" rx="1"/>
<rect x="517.4" y="270.4" width="3.8" height="4" fill="#fff" stroke="#333" stroke-width="0.8"/>
<rect x="445.2" y="277.8" width="5.6" height="5.6" fill="#e86048" stroke="#b83828" stroke-width="0.4" rx="1.2"/>
<circle cx="445" cy="283" r="2.3" fill="#58b838" stroke="#388020" stroke-width="0.4"/>
<rect x="446.6" y="282.2" width="3.6" height="2.8" fill="#f0c848"/>
<text x="452.4" y="283.976" font-size="6.6" fill="#15507e" textLength="27" lengthAdjust="spacingAndGlyphs" stroke="#15507e" stroke-width="0.22">Digital[ 3 ]</text>
<rect x="400.6" y="287.5" width="5.2" height="5" fill="#30c030" stroke="#187018" stroke-width="0.7"/>
<path d="M406.0 293.1 q-0.8-3.6 1.6-6.4 q0.4 2.4 1.8 3 q0.6-1.4 2-1.8 q2 2.6 1 5.2z" fill="#e04818"/>
<path d="M407.59999999999997 293.1 q0-1.8 1.2-2.8 q1.4 1.2 1.4 2.8z" fill="#f8c020"/>
<text x="414.6" y="292.604" font-size="6.4" fill="#111" textLength="18.6" lengthAdjust="spacingAndGlyphs" stroke="#111" stroke-width="0.22">Analog</text>
<rect x="401.2" y="296.9" width="3.8" height="4" fill="#fff" stroke="#333" stroke-width="0.8"/>
<rect x="406.2" y="295.3" width="7" height="7.2" fill="#e86048" stroke="#b83828" stroke-width="0.5" rx="1.6"/>
<rect x="408.6" y="296.9" width="2.4" height="4" fill="none" stroke="#ffd8c8" stroke-width="0.7" rx="1"/>
<text x="414.6" y="301.404" font-size="6.4" fill="#111" textLength="18" lengthAdjust="spacingAndGlyphs" stroke="#111" stroke-width="0.22">Digital</text>
<text x="497.2" y="292.504" font-size="6.4" fill="#111" textLength="9.6" lengthAdjust="spacingAndGlyphs" stroke="#111" stroke-width="0.22">Out</text>
<rect x="508.4" y="286.5" width="7" height="7.2" fill="#e86048" stroke="#b83828" stroke-width="0.5" rx="1.6"/>
<rect x="510.8" y="288.1" width="2.4" height="4" fill="none" stroke="#ffd8c8" stroke-width="0.7" rx="1"/>
<rect x="517.4" y="288.1" width="3.8" height="4" fill="#fff" stroke="#333" stroke-width="0.8"/>
<rect x="445.2" y="305.2" width="5.6" height="5.6" fill="#e86048" stroke="#b83828" stroke-width="0.4" rx="1.2"/>
<circle cx="445" cy="310.4" r="2.3" fill="#58b838" stroke="#388020" stroke-width="0.4"/>
<rect x="446.6" y="309.6" width="3.6" height="2.8" fill="#f0c848"/>
<text x="452.4" y="311.376" font-size="6.6" fill="#15507e" textLength="27" lengthAdjust="spacingAndGlyphs" stroke="#15507e" stroke-width="0.22">Digital[ 4 ]</text>
<rect x="401.2" y="315.5" width="3.8" height="4" fill="#fff" stroke="#333" stroke-width="0.8"/>
<rect x="406.2" y="313.9" width="7" height="7.2" fill="#e86048" stroke="#b83828" stroke-width="0.5" rx="1.6"/>
<rect x="408.6" y="315.5" width="2.4" height="4" fill="none" stroke="#ffd8c8" stroke-width="0.7" rx="1"/>
<text x="414.6" y="320.004" font-size="6.4" fill="#111" textLength="18" lengthAdjust="spacingAndGlyphs" stroke="#111" stroke-width="0.22">Digital</text>
<text x="497.2" y="319.904" font-size="6.4" fill="#111" textLength="9.6" lengthAdjust="spacingAndGlyphs" stroke="#111" stroke-width="0.22">Out</text>
<rect x="508.4" y="313.9" width="7" height="7.2" fill="#e86048" stroke="#b83828" stroke-width="0.5" rx="1.6"/>
<rect x="510.8" y="315.5" width="2.4" height="4" fill="none" stroke="#ffd8c8" stroke-width="0.7" rx="1"/>
<rect x="517.4" y="315.5" width="3.8" height="4" fill="#fff" stroke="#333" stroke-width="0.8"/>
<rect x="445.2" y="323.2" width="5.6" height="5.6" fill="#e86048" stroke="#b83828" stroke-width="0.4" rx="1.2"/>
<circle cx="445" cy="328.4" r="2.3" fill="#58b838" stroke="#388020" stroke-width="0.4"/>
<rect x="446.6" y="327.6" width="3.6" height="2.8" fill="#f0c848"/>
<text x="452.4" y="329.376" font-size="6.6" fill="#15507e" textLength="27" lengthAdjust="spacingAndGlyphs" stroke="#15507e" stroke-width="0.22">Digital[ 5 ]</text>
<rect x="401.2" y="333.5" width="3.8" height="4" fill="#fff" stroke="#333" stroke-width="0.8"/>
<rect x="406.2" y="331.9" width="7" height="7.2" fill="#e86048" stroke="#b83828" stroke-width="0.5" rx="1.6"/>
<rect x="408.6" y="333.5" width="2.4" height="4" fill="none" stroke="#ffd8c8" stroke-width="0.7" rx="1"/>
<text x="414.6" y="338.004" font-size="6.4" fill="#111" textLength="18" lengthAdjust="spacingAndGlyphs" stroke="#111" stroke-width="0.22">Digital</text>
<text x="497.2" y="337.904" font-size="6.4" fill="#111" textLength="9.6" lengthAdjust="spacingAndGlyphs" stroke="#111" stroke-width="0.22">Out</text>
<rect x="508.4" y="331.9" width="7" height="7.2" fill="#e86048" stroke="#b83828" stroke-width="0.5" rx="1.6"/>
<rect x="510.8" y="333.5" width="2.4" height="4" fill="none" stroke="#ffd8c8" stroke-width="0.7" rx="1"/>
<rect x="517.4" y="333.5" width="3.8" height="4" fill="#fff" stroke="#333" stroke-width="0.8"/>
<rect x="294.8" y="182.8" width="72.4" height="36.2" fill="#fdf6e2" stroke="#e07878" stroke-width="1" rx="2.6"/>
<path d="M295.6 195.4 V185.6 a2 2 0 0 1 2-2 h66.8 a2 2 0 0 1 2 2 V195.4z" fill="url(#sh)"/>
<line x1="295.4" y1="195.6" x2="366.6" y2="195.6" stroke="#e8a0a0" stroke-width="0.6"/>
<rect x="297.4" y="186.4" width="7.2" height="6.6" fill="#f4f0e0" stroke="#9898a8" stroke-width="0.5"/>
<circle cx="299.6" cy="188.6" r="1.6" fill="#f8d848"/>
<rect x="297.8" y="190.4" width="6.4" height="2.2" fill="#c04878"/>
<text x="300.8" y="189.208" font-size="2.8" fill="#3848a8" font-weight="bold">I²C</text>
<text x="309.2" y="192.14" font-size="6.5" fill="#151515" font-weight="bold" textLength="38.4" lengthAdjust="spacingAndGlyphs">LightSensor1</text>
<rect x="292.6" y="197.8" width="5.8" height="5.6" fill="#36cc36" stroke="#1a7a1a" stroke-width="0.7"/>
<path d="M300.2 202.9 h1.7 v-5.2 h2.6 v5.2 h1.7" fill="none" stroke="#111" stroke-width="1.05"/>
<text x="307.6" y="203.004" font-size="6.4" fill="#111" textLength="16" lengthAdjust="spacingAndGlyphs" stroke="#111" stroke-width="0.22">Clock</text>
<rect x="292.6" y="207" width="5.8" height="5.6" fill="#36cc36" stroke="#1a7a1a" stroke-width="0.7"/>
<path d="M300.2 212.10000000000002 h1.7 v-5.2 h2.6 v5.2 h1.7" fill="none" stroke="#111" stroke-width="1.05"/>
<text x="307.6" y="212.204" font-size="6.4" fill="#111" textLength="16.6" lengthAdjust="spacingAndGlyphs" stroke="#111" stroke-width="0.22">Reset</text>
<text x="345" y="202.904" font-size="6.4" fill="#111" textLength="10.2" lengthAdjust="spacingAndGlyphs" stroke="#111" stroke-width="0.22">Out</text>
<path d="M356.8 203.4 q-0.8-3.6 1.6-6.4 q0.4 2.4 1.8 3 q0.6-1.4 2-1.8 q2 2.6 1 5.2z" fill="#e04818"/>
<path d="M358.4 203.4 q0-1.8 1.2-2.8 q1.4 1.2 1.4 2.8z" fill="#f8c020"/>
<rect x="365.3" y="199" width="3.2" height="3.2" fill="#e03828" stroke="#901810" stroke-width="0.6"/>
<text x="335.2" y="212.104" font-size="6.4" fill="#111" textLength="19.6" lengthAdjust="spacingAndGlyphs" stroke="#111" stroke-width="0.22">Control</text>
<path d="M357.6 210.6 l3.4-1.4 l3.8 1.2 v2 l-3.6 1.6 l-3.6-1.4z" fill="#5868a8" stroke="#384070" stroke-width="0.3"/>
<circle cx="359.6" cy="212" r="1.3" fill="#b06060"/>
<text x="356.4" y="209.8" font-size="5" fill="#2030b0" font-weight="bold" textLength="8.6" lengthAdjust="spacingAndGlyphs">I²C</text>
<rect x="365.3" y="208.2" width="3.2" height="3.4" fill="#fff" stroke="#c03030" stroke-width="0.7"/>
</g>
<rect x="137.9" y="339.8" width="462.3" height="12.5" fill="#f0f0f0"/>
<text x="138.6" y="348.904" font-size="6.4" fill="#222" textLength="22.6" lengthAdjust="spacingAndGlyphs" stroke="#222" stroke-width="0.16">448:303</text>
<text x="179" y="348.904" font-size="6.4" fill="#222" textLength="206.6" lengthAdjust="spacingAndGlyphs" stroke="#222" stroke-width="0.16">Arduino.__OpenWireRootUnit__.Arduino.Serial._Item0.InputPin 448:304</text>
<rect x="137.9" y="352.3" width="462.3" height="29.5" fill="#fbeee6"/>
<text x="143" y="363.304" font-size="6.4" fill="#111" textLength="13" lengthAdjust="spacingAndGlyphs" stroke="#111" stroke-width="0.16">Port:</text>
<rect x="160.4" y="355.4" width="48" height="11.2" fill="#e4e4e4" stroke="#adadad" stroke-width="0.7"/>
<text x="163" y="363.404" font-size="6.4" fill="#111" textLength="16.4" lengthAdjust="spacingAndGlyphs" stroke="#111" stroke-width="0.16">COM8</text>
<path d="M201 359.8 l2.1 2.2 l2.1-2.2" fill="none" stroke="#444" stroke-width="0.7"/>
<text x="212.2" y="363.304" font-size="6.4" fill="#111" textLength="18.3" lengthAdjust="spacingAndGlyphs" stroke="#111" stroke-width="0.16">Speed:</text>
<rect x="235" y="355.4" width="40.4" height="11.2" fill="#fff" stroke="#7a7a7a" stroke-width="0.7"/>
<text x="237.2" y="363.404" font-size="6.4" fill="#111" textLength="12.6" lengthAdjust="spacingAndGlyphs" stroke="#111" stroke-width="0.16">9600</text>
<path d="M268 359.8 l2.1 2.2 l2.1-2.2" fill="none" stroke="#444" stroke-width="0.7"/>
<text x="279.5" y="363.304" font-size="6.4" fill="#111" textLength="22" lengthAdjust="spacingAndGlyphs" stroke="#111" stroke-width="0.16">Format:</text>
<line x1="279.5" y1="364.4" x2="283" y2="364.4" stroke="#333" stroke-width="0.5"/>
<rect x="304.4" y="355.4" width="98.2" height="11.2" fill="#e4e4e4" stroke="#adadad" stroke-width="0.7"/>
<text x="307" y="363.404" font-size="6.4" fill="#111" textLength="49" lengthAdjust="spacingAndGlyphs" stroke="#111" stroke-width="0.16">Unformatted Text</text>
<path d="M395.4 359.8 l2.1 2.2 l2.1-2.2" fill="none" stroke="#444" stroke-width="0.7"/>
<rect x="406.6" y="357.9" width="6.7" height="6.9" fill="#fff" stroke="#444" stroke-width="0.7"/>
<path d="M407.9 361.2 l1.8 2 l2.7-3.8" fill="none" stroke="#111" stroke-width="0.9"/>
<text x="415.2" y="363.504" font-size="6.4" fill="#111" textLength="15.4" lengthAdjust="spacingAndGlyphs" stroke="#111" stroke-width="0.16">Reset</text>
<rect x="437.2" y="355.1" width="47.8" height="12.6" fill="#e2e2e2" stroke="#adadad" stroke-width="0.7"/>
<path d="M445 365.4 l0.8-6 l7-2.2 l-0.6 6.6z" fill="#e0a818" stroke="#3a2a08" stroke-width="0.7"/>
<path d="M446.4 364 l5.4-5.4" fill="none" stroke="#2a2208" stroke-width="1.2"/>
<path d="M447 360.4 l3.4-1.2" fill="none" stroke="#f8e080" stroke-width="0.8"/>
<text x="455.8" y="363.704" font-size="6.4" fill="#111" textLength="22" lengthAdjust="spacingAndGlyphs" stroke="#111" stroke-width="0.16">Connect</text>
<path d="M587.6 355.2 l4.5 4.5" fill="none" stroke="#a4acb8" stroke-width="1.6"/>
<path d="M596.6 355.2 l-4.5 4.5" fill="none" stroke="#a4acb8" stroke-width="1.4"/>
<path d="M591.8000000000001 359.4 l4.8 4.8" fill="none" stroke="#d85040" stroke-width="1.8"/>
<path d="M592.4 359.4 l-4.8 4.8" fill="none" stroke="#3460c0" stroke-width="1.8"/>
<path d="M587.0 356.8 l1.2 -2.0 M595.2 354.8 l1.8 1.8" fill="none" stroke="#8c94a0" stroke-width="1.1"/>
<rect x="137.9" y="369.9" width="42.5" height="12.4" fill="#ffffff" stroke="#dadada" stroke-width="0.6"/>
<rect x="180.4" y="370.8" width="33.4" height="10.6" fill="#f3f3f3" stroke="#dcdcdc" stroke-width="0.6"/>
<rect x="142.3" y="371.6" width="7.9" height="6" fill="#1f3a22" stroke="#111" stroke-width="0.4"/>
<path d="M143.6 373.4 l1.6 1.2 l-1.6 1.2" fill="none" stroke="#8fd080" stroke-width="0.6"/>
<text x="153.9" y="377.704" font-size="6.4" fill="#111" textLength="22.2" lengthAdjust="spacingAndGlyphs" stroke="#111" stroke-width="0.16">Terminal</text>
<rect x="184" y="371.4" width="7" height="5.4" fill="#3b78c8" stroke="#2a5aa0" stroke-width="0.4"/>
<line x1="185" y1="374.2" x2="190" y2="374.2" stroke="#cfe2fa" stroke-width="0.7"/>
<text x="195" y="377.904" font-size="6.4" fill="#111" textLength="16" lengthAdjust="spacingAndGlyphs" stroke="#111" stroke-width="0.16">Scope</text>
<rect x="137.9" y="381.8" width="462.3" height="155.4" fill="#fdfdfd"/>
<rect x="130.8" y="340" width="7.1" height="200" fill="#f7f7f7"/>
<line x1="134.4" y1="340" x2="134.4" y2="538" stroke="#e2e2e2" stroke-width="0.7"/>
<rect x="597.4" y="381.8" width="2.8" height="155.4" fill="#f3f3f3"/>
<rect x="143.3" y="389.7" width="7" height="6.8" fill="#fff" stroke="#444" stroke-width="0.7"/>
<path d="M144.6 393 l1.8 2 l2.8-3.9" fill="none" stroke="#111" stroke-width="0.9"/>
<text x="152.2" y="395.504" font-size="6.4" fill="#111" textLength="28.2" lengthAdjust="spacingAndGlyphs" stroke="#111" stroke-width="0.16">Auto Scroll</text>
<rect x="188" y="389.7" width="7" height="6.8" fill="#fff" stroke="#444" stroke-width="0.7"/>
<text x="196.6" y="395.504" font-size="6.4" fill="#111" textLength="11.4" lengthAdjust="spacingAndGlyphs" stroke="#111" stroke-width="0.16">Hold</text>
<rect x="543.8" y="384.4" width="49.2" height="12.6" fill="#e2e2e2" stroke="#adadad" stroke-width="0.7"/>
<path d="M557.6 387.2 l2 3.4" fill="none" stroke="#b08820" stroke-width="1"/>
<path d="M558.4 391 l3.8-1.4 l1.6 3.8 l-4.8 1.4z" fill="#f0d450" stroke="#b89020" stroke-width="0.4"/>
<text x="566.8" y="393.304" font-size="6.4" fill="#111" textLength="14" lengthAdjust="spacingAndGlyphs" stroke="#111" stroke-width="0.16">Clear</text>
<rect x="139.2" y="401.5" width="457.3" height="114.8" fill="#ffffff" stroke="#9a9a9a" stroke-width="0.8"/>
<rect x="587.2" y="402" width="8.8" height="113.8" fill="#f7f7f7"/>
<path d="M589.6 408.6 l2 -2.1 l2 2.1" fill="none" stroke="#a0a0a0" stroke-width="0.8"/>
<path d="M589.6 509.8 l2 2.1 l2 -2.1" fill="none" stroke="#a0a0a0" stroke-width="0.8"/>
<rect x="143.8" y="522" width="359.6" height="11" fill="#fff" stroke="#e0d8d8" stroke-width="0.8"/>
<rect x="507.2" y="523.8" width="6.8" height="6.9" fill="#fff" stroke="#444" stroke-width="0.7"/>
<path d="M508.5 527.1 l1.8 2 l2.7-3.8" fill="none" stroke="#111" stroke-width="0.9"/>
<text x="516" y="529.604" font-size="6.4" fill="#111" textLength="27.4" lengthAdjust="spacingAndGlyphs" stroke="#111" stroke-width="0.16">Auto Clear</text>
<rect x="552" y="521" width="41" height="12.6" fill="#cccccc" stroke="#bcbcbc" stroke-width="0.6"/>
<rect x="561" y="524.4" width="6.6" height="5.6" fill="#b8b8b8" stroke="#8a8a8a" stroke-width="0.5"/>
<rect x="562.4" y="525.6" width="3" height="2.4" fill="#e8e8e8"/>
<text x="571.8" y="529.604" font-size="6.4" fill="#222" textLength="13" lengthAdjust="spacingAndGlyphs" stroke="#222" stroke-width="0.16">Send</text>
<rect x="600.2" y="42.4" width="155.8" height="506" fill="#f0f0f0"/>
<rect x="600.2" y="42.4" width="155.8" height="15" fill="#fbeee6"/>
<rect x="603" y="44.6" width="62.4" height="11.6" fill="#fff" stroke="#9a9a9a" stroke-width="0.7"/>
<text x="605.2" y="52.776" font-size="6.6" fill="#111" textLength="12.4" lengthAdjust="spacingAndGlyphs" stroke="#111" stroke-width="0.16">light</text>
<path d="M669 46.4 L677 54.6 M677 46.2 L669.4 54.8" fill="none" stroke="#c83030" stroke-width="1.6"/>
<path d="M672 50 l3 3" fill="none" stroke="#3a3a3a" stroke-width="1"/>
<rect x="679.4" y="44.8" width="11.4" height="10.8" fill="#c6d7ee" stroke="#a8c0e2" stroke-width="0.5"/>
<path d="M681.4 54 q4-1.4 8 0 l-1.6-2 l-1.2-5 l-1.6-1 l-1.4 6z" fill="#3848a8" stroke="#28307a" stroke-width="0.4"/>
<path d="M691.2 49.6 h3 l-1.5 1.8z" fill="#222"/>
<path d="M696.8 47 h3.4 l1 1 h3.6 v5.6 h-8z" fill="#f0d468" stroke="#c3a02c" stroke-width="0.5"/>
<rect x="700.8" y="49.6" width="4.2" height="4.6" fill="#f8ecb0" stroke="#c3a02c" stroke-width="0.4"/>
<path d="M709.6 47 h3.4 l1 1 h3.6 v5.6 h-8z" fill="#f0d468" stroke="#c3a02c" stroke-width="0.5"/>
<rect x="712.2" y="49.6" width="6.2" height="5" fill="#3fa6d8" stroke="#2878b0" stroke-width="0.5" rx="1.2"/>
<path d="M722 47 h3.4 l1 1 h3.6 v5.6 h-8z" fill="#f0d468" stroke="#c3a02c" stroke-width="0.5"/>
<rect x="724.6" y="49.6" width="6.2" height="5" fill="#3fa6d8" stroke="#2878b0" stroke-width="0.5" rx="1.2"/>
<path d="M734.2 46.2 l4.5 4.5" fill="none" stroke="#a4acb8" stroke-width="1.6"/>
<path d="M743.2 46.2 l-4.5 4.5" fill="none" stroke="#a4acb8" stroke-width="1.4"/>
<path d="M738.4000000000001 50.400000000000006 l4.8 4.8" fill="none" stroke="#d85040" stroke-width="1.8"/>
<path d="M739.0 50.400000000000006 l-4.8 4.8" fill="none" stroke="#3460c0" stroke-width="1.8"/>
<path d="M733.6 47.800000000000004 l1.2 -2.0 M741.8000000000001 45.800000000000004 l1.8 1.8" fill="none" stroke="#8c94a0" stroke-width="1.1"/>
<rect x="603.2" y="60.2" width="94.4" height="69.4" fill="#ffffff" rx="3.2"/>
<path d="M603.2 71.60000000000001 V63.400000000000006 a3.2 3.2 0 0 1 3.2 -3.2 h88.0 a3.2 3.2 0 0 1 3.2 3.2 V71.60000000000001z" fill="url(#hd)"/>
<rect x="603.2" y="60.2" width="94.4" height="69.4" fill="none" stroke="#242424" stroke-width="1.8" rx="3.2"/>
<path d="M607 69.6 l3-3.4 M608.4 64.2 l3 2.8" fill="none" stroke="#d8c8a0" stroke-width="0.9"/>
<text x="616.8" y="68.704" font-size="6.4" fill="#f4f4f4" textLength="37.6" lengthAdjust="spacingAndGlyphs" stroke="#f4f4f4" stroke-width="0.16">Measurement</text>
<rect x="609.3" y="77.2" width="70.4" height="45.2" fill="#ffffff" rx="2.6"/>
<path d="M609.3 88.4 V79.8 a2.6 2.6 0 0 1 2.6 -2.6 h65.2 a2.6 2.6 0 0 1 2.6 2.6 V88.4z" fill="url(#hg)"/>
<rect x="609.3" y="77.2" width="70.4" height="45.2" fill="none" stroke="#44b044" stroke-width="1.3" rx="2.6"/>
<line x1="610" y1="88.5" x2="679" y2="88.5" stroke="#3c9c3c" stroke-width="0.7"/>
<path d="M611.6 85 q-0.6-3 1.4-5.4 q0.4 2 1.6 2.6 q0.4-1.2 1.6-1.6 q1.8 2.2 0.8 4.4z" fill="#e04818"/>
<path d="M612.8000000000001 85 q0-1.6 1-2.4 q1.2 1 1.2 2.4z" fill="#f8c020"/>
<text x="623" y="85.704" font-size="6.4" fill="#f0fff0" textLength="18.4" lengthAdjust="spacingAndGlyphs" stroke="#f0fff0" stroke-width="0.16">Analog</text>
<rect x="615.3" y="94.4" width="20.8" height="20.6" fill="url(#ic)" stroke="#3a3a3a" stroke-width="0.8" rx="2.2"/>
<rect x="617" y="96.1" width="17.4" height="8.6" fill="#ccd2ea"/>
<rect x="617" y="103.8" width="17.4" height="5.6" fill="#f4e8b0"/>
<rect x="617" y="109.2" width="17.4" height="4.2" fill="#c44458"/>
<circle cx="621.5" cy="100.8" r="3.7" fill="#f8e45c"/>
<text x="626.7" y="100.656" font-size="4.6" fill="#4858a8" font-weight="bold" textLength="7.4" lengthAdjust="spacingAndGlyphs">I²C</text>
<text x="617.2" y="108.616" font-size="5.6" fill="#161650" font-weight="bold" textLength="17" lengthAdjust="spacingAndGlyphs">BH175</text>
<circle cx="621.3" cy="111.2" r="1.4" fill="#f0d0d8"/>
<rect x="640.2" y="94.4" width="20.8" height="20.6" fill="url(#ic)" stroke="#3a3a3a" stroke-width="0.8" rx="2.2"/>
<path d="M642.8000000000001 112.80000000000001 v-5.4 l4.4-3.4 l3.4 2.6 l3.2-2.2 l4.6 2.4 v4.2 l-4 2z" fill="#2454c4" stroke="#1a3a90" stroke-width="0.4"/>
<path d="M642.8000000000001 107.4 l4.4-3.4 l3.4 2.6 l-4.2 2.8z" fill="#4a7ae0"/>
<circle cx="650" cy="99.4" r="3.9" fill="#f8f0a0"/>
<rect x="648.6" y="102.4" width="2.8" height="2.6" fill="#e0d890"/>
<rect x="603.2" y="134.4" width="69.6" height="44.2" fill="#ffffff" rx="3.2"/>
<path d="M603.2 145.4 V137.6 a3.2 3.2 0 0 1 3.2 -3.2 h63.199999999999996 a3.2 3.2 0 0 1 3.2 3.2 V145.4z" fill="url(#hd)"/>
<rect x="603.2" y="134.4" width="69.6" height="44.2" fill="none" stroke="#242424" stroke-width="1.8" rx="3.2"/>
<path d="M605.8 142.4 q-0.6-3 1.4-5.4 q0.4 2 1.6 2.6 q0.4-1.2 1.6-1.6 q1.8 2.2 0.8 4.4z" fill="#e04818"/>
<path d="M607.0 142.4 q0-1.6 1-2.4 q1.2 1 1.2 2.4z" fill="#f8c020"/>
<text x="616.6" y="142.704" font-size="6.4" fill="#f4f4f4" textLength="18.4" lengthAdjust="spacingAndGlyphs" stroke="#f4f4f4" stroke-width="0.16">Analog</text>
<rect x="609.3" y="151" width="20.8" height="20.6" fill="url(#ic)" stroke="#3a3a3a" stroke-width="0.8" rx="2.2"/>
<rect x="611" y="152.7" width="17.4" height="8.6" fill="#ccd2ea"/>
<rect x="611" y="160.4" width="17.4" height="5.6" fill="#f4e8b0"/>
<rect x="611" y="165.8" width="17.4" height="4.2" fill="#c44458"/>
<circle cx="615.5" cy="157.4" r="3.7" fill="#f8e45c"/>
<text x="620.7" y="157.256" font-size="4.6" fill="#4858a8" font-weight="bold" textLength="7.4" lengthAdjust="spacingAndGlyphs">I²C</text>
<text x="611.2" y="165.216" font-size="5.6" fill="#161650" font-weight="bold" textLength="17" lengthAdjust="spacingAndGlyphs">BH175</text>
<circle cx="615.3" cy="167.8" r="1.4" fill="#f0d0d8"/>
<rect x="633.8" y="151" width="20.8" height="20.6" fill="url(#ic)" stroke="#3a3a3a" stroke-width="0.8" rx="2.2"/>
<path d="M636.4 169.4 v-5.4 l4.4-3.4 l3.4 2.6 l3.2-2.2 l4.6 2.4 v4.2 l-4 2z" fill="#2454c4" stroke="#1a3a90" stroke-width="0.4"/>
<path d="M636.4 164 l4.4-3.4 l3.4 2.6 l-4.2 2.8z" fill="#4a7ae0"/>
<circle cx="643.6" cy="156" r="3.9" fill="#f8f0a0"/>
<rect x="642.2" y="159" width="2.8" height="2.6" fill="#e0d890"/>
<rect x="600.2" y="525.6" width="155.8" height="12.2" fill="#fbeee6"/>
<text x="651.2" y="534.676" font-size="6.6" fill="#111" font-weight="bold" textLength="57" lengthAdjust="spacingAndGlyphs">Arduino eBay Ads:</text>
<path d="M723.6 527.8 l4.140000000000001 4.140000000000001" fill="none" stroke="#a4acb8" stroke-width="1.472"/>
<path d="M731.88 527.8 l-4.140000000000001 4.140000000000001" fill="none" stroke="#a4acb8" stroke-width="1.288"/>
<path d="M727.464 531.664 l4.416 4.416" fill="none" stroke="#d85040" stroke-width="1.656"/>
<path d="M728.0160000000001 531.664 l-4.416 4.416" fill="none" stroke="#3460c0" stroke-width="1.656"/>
<path d="M723.048 529.2719999999999 l1.104 -1.84 M730.592 527.4319999999999 l1.6560000000000001 1.6560000000000001" fill="none" stroke="#8c94a0" stroke-width="1.012"/>
<rect x="737" y="528.2" width="7.6" height="8" fill="#d02830" stroke="#a01820" stroke-width="0.5" rx="1"/>
<circle cx="740.8" cy="532.2" r="2.3" fill="none" stroke="#fff" stroke-width="0.8"/>
<path d="M739.8 531.8 l1 1.2 l1-1.2" fill="none" stroke="#fff" stroke-width="0.7"/>

<rect x="-8" y="17" width="9.2" height="531" fill="#5a7896"/>
<rect x="1.2" y="168.6" width="1.6" height="369" fill="#f6fafe"/>
<rect x="744.3" y="27.5" width="2.6" height="511" fill="#f8fbfe"/>
<rect x="746.9" y="17" width="9" height="531" fill="#5a92cc"/>
<rect x="1.2" y="536.6" width="745.7" height="1.8" fill="#fbfdff"/>
<rect x="-8" y="538.6" width="764" height="9.6" fill="#8eacd0"/>
</g>
</svg></body></html>
